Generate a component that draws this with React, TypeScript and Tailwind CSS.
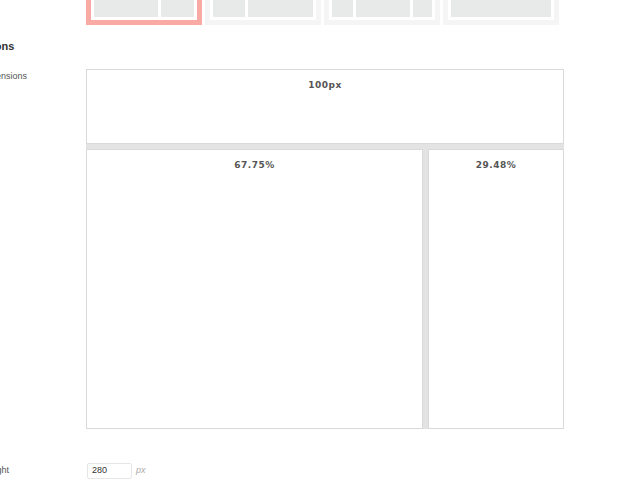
const tiles = [
  { selected: true, blocks: ['w-[64px]', 'w-[33px]'] },
  { selected: false, blocks: ['w-[32px]', 'w-[65px]'] },
  { selected: false, blocks: ['w-[21px]', 'w-[54px]', 'w-[19px]'] },
  { selected: false, blocks: ['w-full'] },
];

export default function App() {
  return (
    <div className="w-[629px] h-[488px] overflow-hidden bg-white font-['Liberation_Sans',Arial,sans-serif] text-[#333]">
      <div className="-ml-[48px] grid grid-cols-[134px_478px]">
        {/* Layout presets */}
        <div />
        <div className="-mt-[21px] flex gap-[3px]">
          {tiles.map((t, i) => (
            <div
              key={i}
              className={
                t.selected
                  ? 'w-[116px] border-[5px] border-[#faaaa4] bg-white p-[3px]'
                  : 'w-[116px] border-[5px] border-[#f5f5f5] bg-white p-[3px]'
              }
            >
              <div className="flex h-[30px] gap-[3px]">
                {t.blocks.map((w, j) => (
                  <div key={j} className={`${w} h-full bg-[#e8e9e9]`} />
                ))}
              </div>
            </div>
          ))}
        </div>

        {/* Section heading */}
        <h3 className="col-span-2 mt-[14px] text-[11px] font-bold leading-[14px] text-[#333]">Dimensions</h3>

        {/* Layout dimensions */}
        <div className="mt-[16px] pt-[1px] text-[9px] leading-[12px] text-[#555]">Layout dimensions</div>
        <div className="mt-[16px] flex flex-col gap-[5px] bg-[#e3e3e3] font-['DejaVu_Sans',Verdana,sans-serif] text-[9px] font-bold leading-[12px] tracking-[0.5px] text-[#555]">
          <div className="h-[75px] border border-[#d9d9d9] bg-white pt-[9px] text-center">100px</div>
          <div className="flex h-[280px] gap-[5px]">
            <div className="w-[337px] border border-[#d9d9d9] bg-white pt-[9px] text-center">67.75%</div>
            <div className="flex-1 border border-[#d9d9d9] bg-white pt-[9px] text-center">29.48%</div>
          </div>
        </div>

        {/* Section height */}
        <div className="mt-[34px] flex h-[16px] items-center text-[9px] text-[#555]">Section height</div>
        <div className="mt-[34px] flex items-center gap-[4px]">
          <div className="ml-px flex h-[16px] w-[45px] items-center rounded-[2px] border border-[#e6e6e6] px-[4px] text-[9px] text-[#333]">280</div>
          <span className="text-[9px] italic text-[#aaa]">px</span>
        </div>
      </div>
    </div>
  );
}
